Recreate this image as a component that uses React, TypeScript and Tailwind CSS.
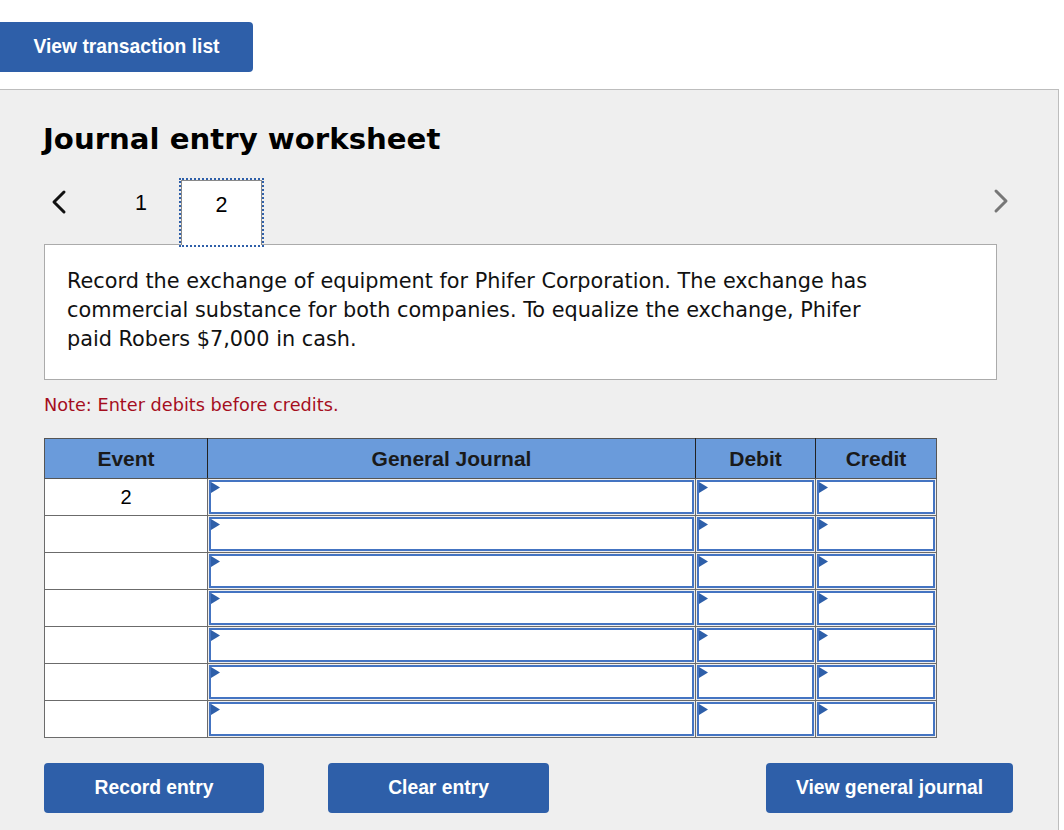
const rows = ["2", "", "", "", "", "", ""];

function Flag() {
  return (
    <svg
      className="absolute left-0 top-0"
      width="9"
      height="11"
      viewBox="0 0 9 11"
    >
      <polygon points="0,0 9,5.5 0,11" fill="#2e5fa9" />
    </svg>
  );
}

function InputCell() {
  return (
    <td className="border border-[#6b6b6b] p-[1px] h-[37px]">
      <div className="relative h-full border-2 border-[#4474c2] bg-white">
        <Flag />
      </div>
    </td>
  );
}

export default function App() {
  return (
    <div className="w-[1064px] h-[830px] bg-white overflow-hidden">
      {/* top bar */}
      <div className="h-[89px] pt-[22px]">
        <button className="w-[253px] h-[50px] bg-[#2e5fa9] rounded-r-[4px] text-white font-bold text-[19.3px] [font-family:'Liberation_Sans',Arial,sans-serif]">
          View transaction list
        </button>
      </div>

      {/* worksheet panel */}
      <div className="w-[1059px] h-[741px] bg-[#efefef] border-t border-r border-[#bdbdbd] pl-[44px] [font-family:'DejaVu_Sans',Verdana,sans-serif]">
        <h1 className="pt-[32px] -ml-[1px] text-[29.2px] leading-[34px] font-bold text-black">
          Journal entry worksheet
        </h1>

        {/* step nav */}
        <div className="mt-[22px] h-[66px] flex items-start w-[953px]">
          <div className="h-[48px] flex items-center w-[91px] pl-[6px]">
            <svg width="18" height="26" viewBox="0 0 18 26">
              <polyline
                points="14,3 4,13 14,23"
                fill="none"
                stroke="#111"
                strokeWidth="3"
                strokeLinecap="round"
                strokeLinejoin="round"
              />
            </svg>
          </div>
          <div className="h-[50px] w-[46px] flex items-center [font-family:'Liberation_Sans',Arial,sans-serif] text-[21.5px] text-black">
            1
          </div>
          <div className="relative z-10 self-end -mb-px h-[65px] w-[81px] bg-white border border-b-0 border-[#8a8a8a] outline-2 outline-dotted outline-[#2e5fa9]">
            <div className="h-[48px] flex items-center justify-center [font-family:'Liberation_Sans',Arial,sans-serif] text-[21.5px] text-black">
              2
            </div>
          </div>
          <div className="flex-1 h-[46px] flex items-center justify-end">
            <svg className="-mr-[13px]" width="18" height="26" viewBox="0 0 18 26">
              <polyline
                points="4,3 14,13 4,23"
                fill="none"
                stroke="#777"
                strokeWidth="3"
                strokeLinecap="round"
                strokeLinejoin="round"
              />
            </svg>
          </div>
        </div>

        {/* question */}
        <div className="w-[953px] h-[136px] bg-white border border-[#ababab] pl-[22px] pt-[22px] text-[20.8px] leading-[29px] text-[#111]">
          Record the exchange of equipment for Phifer Corporation. The exchange has
          <br />
          commercial substance for both companies. To equalize the exchange, Phifer
          <br />
          paid Robers $7,000 in cash.
        </div>

        <p className="mt-[14px] text-[17.7px] leading-[22px] text-[#a50e1e]">
          Note: Enter debits before credits.
        </p>

        {/* journal table */}
        <table className="mt-[22px] w-[892px] border-collapse table-fixed [font-family:'Liberation_Sans',Arial,sans-serif]">
          <colgroup>
            <col className="w-[163px]" />
            <col className="w-[488px]" />
            <col className="w-[120px]" />
            <col className="w-[121px]" />
          </colgroup>
          <thead>
            <tr className="h-[40px] bg-[#6a9bdb] text-[21px] font-bold text-[#1a1a1a]">
              <th className="border border-[#555] border-r-[#222]">Event</th>
              <th className="border border-[#555] border-x-[#222]">General Journal</th>
              <th className="border border-[#555] border-x-[#222]">Debit</th>
              <th className="border border-[#555] border-l-[#222]">Credit</th>
            </tr>
          </thead>
          <tbody>
            {rows.map((ev, i) => (
              <tr key={i} className="h-[37px]">
                <td className="border border-[#6b6b6b] bg-white text-center text-[20px] text-black">
                  {ev}
                </td>
                <InputCell />
                <InputCell />
                <InputCell />
              </tr>
            ))}
          </tbody>
        </table>

        {/* actions */}
        <div className="mt-[25px] w-[969px] flex items-center [font-family:'Liberation_Sans',Arial,sans-serif]">
          <button className="w-[220px] h-[50px] bg-[#2e5fa9] rounded-[4px] text-white font-bold text-[19.3px]">
            Record entry
          </button>
          <button className="ml-[64px] w-[221px] h-[50px] bg-[#2e5fa9] rounded-[4px] text-white font-bold text-[19.3px]">
            Clear entry
          </button>
          <button className="ml-auto w-[247px] h-[50px] bg-[#2e5fa9] rounded-[4px] text-white font-bold text-[19.3px]">
            View general journal
          </button>
        </div>
      </div>
    </div>
  );
}
